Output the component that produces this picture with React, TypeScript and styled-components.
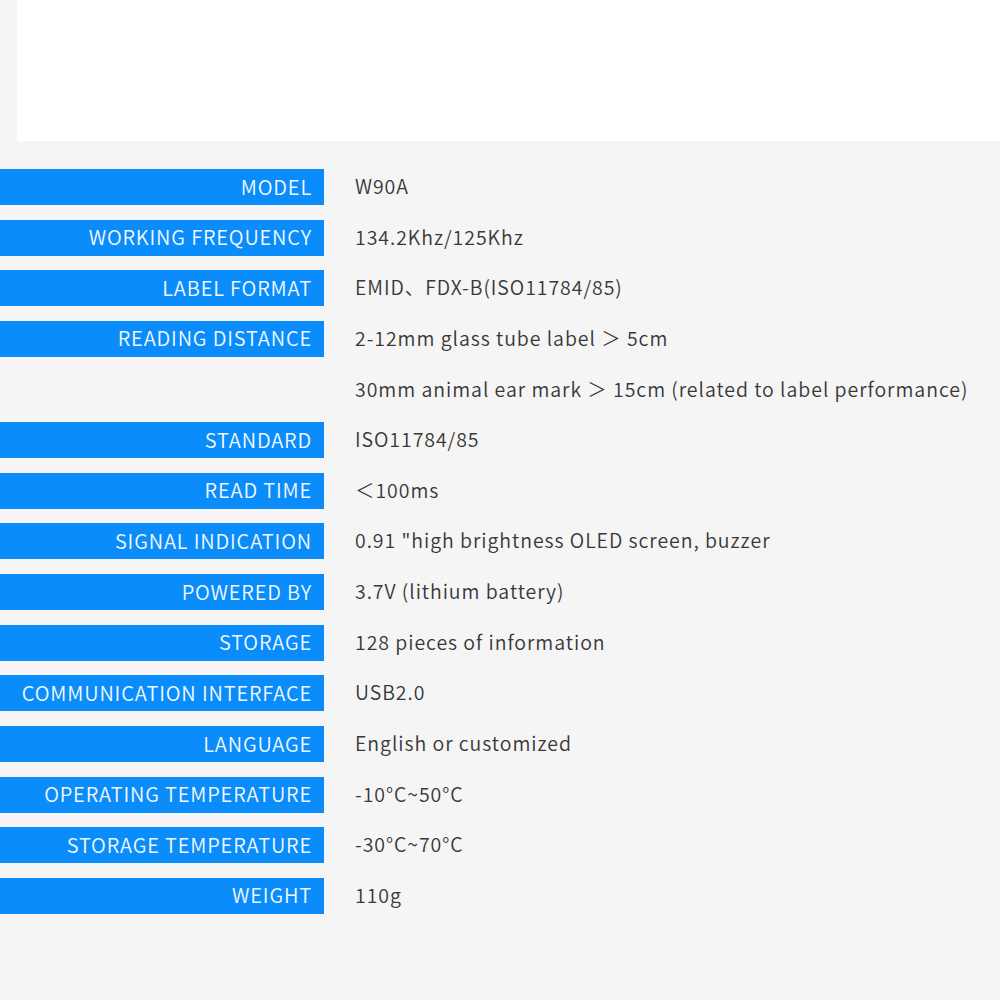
import styled, { createGlobalStyle } from "styled-components";

const GlobalStyle = createGlobalStyle`
  html, body {
    margin: 0;
    padding: 0;
    background: #f5f5f5;
  }
  body {
    font-family: "Noto Sans CJK SC", "Noto Sans", sans-serif;
  }
`;

const Page = styled.div`
  width: 1000px;
  height: 1000px;
  overflow: hidden;
  background: #f5f5f5;
`;

const TopPanel = styled.div`
  margin-left: 17px;
  height: 141px;
  background: #ffffff;
`;

const SpecList = styled.div`
  display: flex;
  flex-direction: column;
  gap: 14.65px;
  padding-top: 28px;
`;

const Row = styled.div`
  display: flex;
  align-items: center;
  height: 36px;
`;

const Label = styled.div<{ $empty?: boolean }>`
  width: 324px;
  height: 36px;
  box-sizing: border-box;
  padding: 0 12px 2px 0;
  display: flex;
  align-items: center;
  justify-content: flex-end;
  background: ${(p) => (p.$empty ? "transparent" : "#0a8cfa")};
  color: #f2f8ff;
  font-size: 20px;
  font-weight: 350;
  letter-spacing: 0.85px;
  white-space: nowrap;
`;

const Value = styled.div`
  margin: 0 0 3px 31px;
  color: #383838;
  font-size: 19.5px;
  font-weight: 350;
  letter-spacing: 0.95px;
  white-space: nowrap;
`;

const specs: [string, string][] = [
  ["MODEL", "W90A"],
  ["WORKING FREQUENCY", "134.2Khz/125Khz"],
  ["LABEL FORMAT", "EMID、FDX-B(ISO11784/85)"],
  ["READING DISTANCE", "2-12mm glass tube label ＞ 5cm"],
  ["", "30mm animal ear mark ＞ 15cm (related to label performance)"],
  ["STANDARD", "ISO11784/85"],
  ["READ TIME", "＜100ms"],
  ["SIGNAL INDICATION", "0.91 \"high brightness OLED screen, buzzer"],
  ["POWERED BY", "3.7V (lithium battery)"],
  ["STORAGE", "128 pieces of information"],
  ["COMMUNICATION INTERFACE", "USB2.0"],
  ["LANGUAGE", "English or customized"],
  ["OPERATING TEMPERATURE", "-10°C~50°C"],
  ["STORAGE TEMPERATURE", "-30°C~70°C"],
  ["WEIGHT", "110g"],
];

export default function App() {
  return (
    <Page>
      <GlobalStyle />
      <TopPanel />
      <SpecList>
        {specs.map(([label, value], i) => (
          <Row key={i}>
            <Label $empty={!label}>{label}</Label>
            <Value>{value}</Value>
          </Row>
        ))}
      </SpecList>
    </Page>
  );
}
